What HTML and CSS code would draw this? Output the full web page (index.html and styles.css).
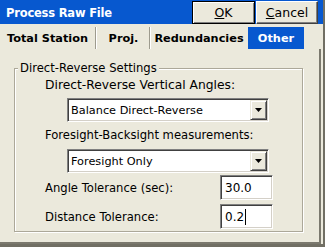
FILE: index.html
```html
<!DOCTYPE html>
<html lang="en">
<head>
  <meta charset="UTF-8" />
  <title>Process Raw File</title>
  <link rel="stylesheet" href="styles.css">
</head>
<body>
  <div class="window">
    <div class="titlebar">
      <span class="title">Process Raw File</span>
      <div class="title-buttons">
        <button class="btn btn-default"><u>O</u>K</button>
        <button class="btn"><u>C</u>ancel</button>
      </div>
    </div>

    <div class="tabs">
      <div class="tab tab-station">Total Station</div>
      <div class="tab tab-proj">Proj.</div>
      <div class="tab tab-redund">Redundancies</div>
      <div class="tab tab-other active">Other</div>
    </div>

    <div class="page">
      <fieldset>
        <legend>Direct-Reverse Settings</legend>

        <div class="field-label label-wide">Direct-Reverse Vertical Angles:</div>
        <div class="combo">
          <span class="combo-text">Balance Direct-Reverse</span>
          <span class="combo-btn"><svg width="7" height="4" viewBox="0 0 7 4"><polygon points="0,0 7,0 3.5,4" fill="#000"/></svg></span>
        </div>

        <div class="field-label label-gap">Foresight-Backsight measurements:</div>
        <div class="combo combo-gap">
          <span class="combo-text">Foresight Only</span>
          <span class="combo-btn"><svg width="7" height="4" viewBox="0 0 7 4"><polygon points="0,0 7,0 3.5,4" fill="#000"/></svg></span>
        </div>

        <div class="row row-first">
          <label>Angle Tolerance (sec):</label>
          <div class="edit">30.0</div>
        </div>
        <div class="row">
          <label>Distance Tolerance:</label>
          <div class="edit">0.2<span class="caret"></span></div>
        </div>
      </fieldset>
    </div>
  </div>
</body>
</html>
```

FILE: styles.css
```css
* { box-sizing: border-box; }
body { margin: 0; font-family: "DejaVu Sans", Verdana, sans-serif; font-size: 11.6px; color: #000; background: #ebe9dc; }

.window { width: 325px; height: 247px; background: #ebe9dc; border-right: 2px solid #716f64; border-bottom: 3px solid #716f64; }

/* title bar */
.titlebar { display: flex; height: 24px; background: #0758cf; padding: 0 5px 0 6px; }
.title { color: #fff; font-weight: bold; font-size: 11.5px; letter-spacing: -0.2px; line-height: 27px; }
.title-buttons { margin-left: auto; display: flex; gap: 1px; padding-top: 1px; }
.btn { width: 62px; height: 23px; padding: 0; background: #ebe9dc; font: 12.5px "DejaVu Sans", Verdana, sans-serif; color: #000; border: 1px solid; border-color: #fff #404040 #404040 #fff; box-shadow: inset -1px -1px 0 #808080; }
.btn-default { width: 63px; border-color: #000; box-shadow: inset 1px 1px 0 #fff, inset -1px -1px 0 #808080; }

/* tabs */
.tabs { display: flex; height: 25px; padding-top: 3px; }
.tab { font-weight: bold; font-size: 11.3px; line-height: 23px; text-align: center; border-right: 1px solid #9d9b8e; box-shadow: 1px 0 0 #fff; }
.tab-station { width: 96px; }
.tab-proj { width: 54px; padding-left: 2px; }
.tab-redund { width: 98px; border-right: none; box-shadow: none; }
.tab-other { width: 56px; }
.tab.active { background: #0758cf; color: #fff; border-right: none; box-shadow: none; }

/* page */
.page { width: 321px; height: 195px; padding: 11px 0 0 14px; border-right: 2px solid #7b796e; border-bottom: 2px solid #7b796e; }

fieldset { width: 289px; margin: 0; padding: 0 0 2px 0; border: 1px solid #aca899; box-shadow: 1px 1px 0 #fff, inset 1px 1px 0 #fff; }
legend { margin-left: 3px; padding: 0 2px; line-height: 16px; background: #ebe9dc; }

.field-label { margin: 1px 0 0 30px; line-height: 16px; }
.label-wide { font-size: 12.3px; }
.label-gap { margin-top: 5px; }

.combo { display: flex; width: 202px; height: 24px; margin: 5px 0 0 52px; background: #fff; border: 1px solid; border-color: #808080 #fff #fff #808080; box-shadow: inset 1px 1px 0 #404040, inset -1px -1px 0 #d4d0c8; padding: 1px; }
.combo-gap { margin-top: 6px; }
.combo-text { flex: 1; line-height: 21px; padding-left: 2px; font-size: 11.3px; }
.combo-btn { width: 17px; display: flex; align-items: center; justify-content: center; background: #ebe9dc; border: 1px solid; border-color: #ebe9dc #404040 #404040 #ebe9dc; box-shadow: inset 1px 1px 0 #fff, inset -1px -1px 0 #808080; }

.row { display: flex; align-items: center; padding-left: 30px; margin-top: 4px; }
.row-first { margin-top: 2px; }
.row label { width: 175px; }
.edit { width: 53px; height: 25px; display: flex; align-items: center; padding-left: 4px; background: #fff; font-size: 12px; border: 1px solid; border-color: #808080 #fff #fff #808080; box-shadow: inset 1px 1px 0 #404040, inset -1px -1px 0 #d4d0c8; }
.caret { display: inline-block; width: 1px; height: 16px; margin-left: 1px; background: #000; }
```
